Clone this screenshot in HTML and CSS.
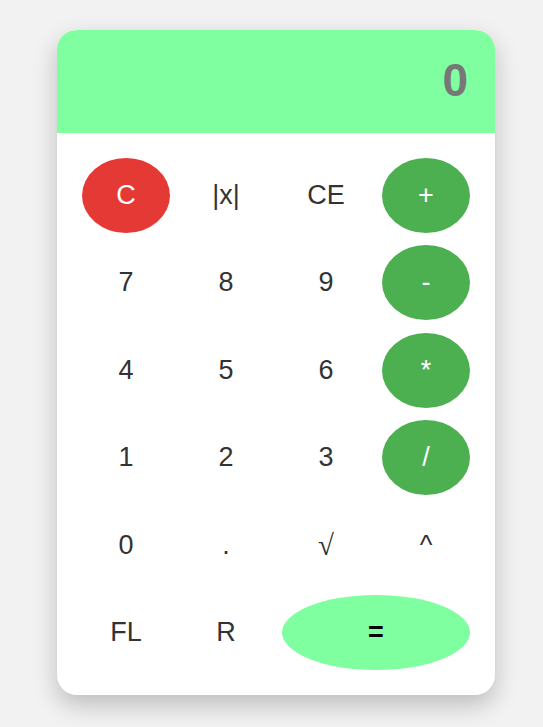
FILE: index.html
```html
<!DOCTYPE html>
<html>
<head>
<meta charset="utf-8">
<link rel="stylesheet" href="styles.css">
</head>
<body>
<div class="page">
  <div class="calc">
    <div class="display">0</div>
    <div class="keys">
      <div class="key red">C</div>
      <div class="key">|x|</div>
      <div class="key">CE</div>
      <div class="key op">+</div>
      <div class="key">7</div>
      <div class="key">8</div>
      <div class="key">9</div>
      <div class="key op">-</div>
      <div class="key">4</div>
      <div class="key">5</div>
      <div class="key">6</div>
      <div class="key op">*</div>
      <div class="key">1</div>
      <div class="key">2</div>
      <div class="key">3</div>
      <div class="key op">/</div>
      <div class="key">0</div>
      <div class="key">.</div>
      <div class="key sqrt">√</div>
      <div class="key">^</div>
      <div class="key">FL</div>
      <div class="key">R</div>
      <div class="key eq">=</div>
    </div>
  </div>
</div>
</body>
</html>
```
FILE: styles.css
```css
html, body {
  margin: 0;
  padding: 0;
  background: #f2f2f2;
  font-family: "Liberation Sans", Arial, sans-serif;
}
.page {
  padding: 30px 0 32px 57px;
}
.calc {
  width: 438px;
  height: 665px;
  background: #ffffff;
  border-radius: 20px;
  overflow: hidden;
  box-shadow: 0 10px 25px rgba(0, 0, 0, 0.22);
}
.display {
  height: 103px;
  background: #7fffa0;
  color: #777777;
  font-weight: bold;
  font-size: 46px;
  display: flex;
  align-items: center;
  justify-content: flex-end;
  padding: 0 27px 4px 0;
  box-sizing: border-box;
}
.keys {
  display: grid;
  grid-template-columns: repeat(4, 88px);
  grid-auto-rows: 75px;
  column-gap: 12px;
  row-gap: 12.4px;
  padding: 25px;
}
.key {
  display: flex;
  align-items: center;
  justify-content: center;
  border-radius: 50%;
  font-size: 27px;
  color: #333333;
}
.sqrt {
  font-family: "Liberation Serif", serif;
  font-size: 29px;
}
.red {
  background: #e53935;
  color: #ffffff;
}
.op {
  background: #4caf50;
  color: #ffffff;
}
.eq {
  grid-column: span 2;
  background: #7fffa0;
  color: #000000;
  font-weight: bold;
}
```
